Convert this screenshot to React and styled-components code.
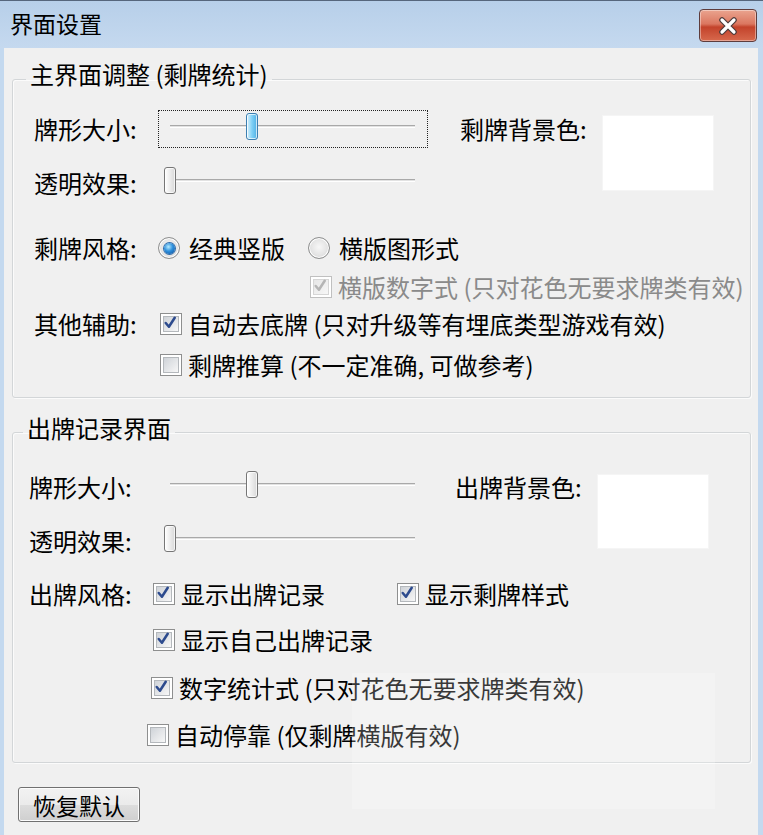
import React from "react";
import styled, { createGlobalStyle } from "styled-components";

const GlobalStyle = createGlobalStyle`
  html, body {
    margin: 0;
    padding: 0;
    background: #f0f0f0;
  }
  body {
    font-family: "Noto Sans CJK SC", "Noto Sans", sans-serif;
    color: #000;
  }
`;

const Window = styled.div`
  position: relative;
  width: 763px;
  height: 835px;
  box-sizing: border-box;
  display: flex;
  flex-direction: column;
  background: #c4d9ef;
  border-top: 1px solid #56667c;
  overflow: hidden;
`;

const TitleBar = styled.div`
  height: 47px;
  flex-shrink: 0;
  display: flex;
  align-items: center;
  justify-content: space-between;
  padding: 0 6px 0 10px;
  background: linear-gradient(#b7cfe9, #c5d9ef);
`;

const Title = styled.span`
  font-size: 23px;
  line-height: 30px;
  margin-top: -4px;
`;

const CloseButton = styled.div`
  width: 58px;
  height: 33px;
  box-sizing: border-box;
  margin-top: 2px;
  border: 1px solid #5e3c3c;
  border-radius: 4px;
  background: linear-gradient(#eaa48f 0%, #db7760 45%, #c3432b 55%, #d7694d 100%);
  box-shadow: inset 0 0 0 1px rgba(255, 255, 255, 0.4);
  display: flex;
  align-items: center;
  justify-content: center;
`;

const Client = styled.div`
  flex: 1;
  margin: 0 5px 0 4px;
  padding: 11px 7px 0 8px;
  background: #f0f0f0;
  display: flex;
  flex-direction: column;
  align-items: stretch;
`;

const GroupBox = styled.fieldset`
  margin: ${(p) => p.$mt}px 0 0;
  padding: ${(p) => p.$pt}px 0 ${(p) => p.$pb}px ${(p) => p.$pl}px;
  border: 1px solid #d3d6d8;
  border-radius: 3px;
  box-shadow: inset 1px 1px 0 #fbfbfb, 1px 1px 0 #fbfbfb;
  min-width: 0;
`;

const Legend = styled.legend`
  font-size: 24px;
  line-height: 30px;
  padding: 0 4px ${(p) => p.$pb}px;
  margin-left: ${(p) => p.$ml}px;
`;

const TopGrid = styled.div`
  display: grid;
  grid-template-columns: ${(p) => p.$label}px 270px ${(p) => p.$gap}px 143px 110px;
  grid-template-rows: 38px 38px;
  row-gap: 16px;
  align-items: center;
`;

const Label = styled.span`
  font-size: 24px;
  line-height: 30px;
  white-space: nowrap;
`;

const Swatch = styled.div`
  grid-column: 5;
  grid-row: 1 / 3;
  align-self: start;
  margin-top: ${(p) => p.$mt}px;
  height: ${(p) => p.$h}px;
  background: #fff;
  box-shadow: 0 0 0 1px #f5f5f5;
`;

const SliderBox = styled.div`
  position: relative;
  height: 38px;
  box-sizing: border-box;
  border: 1px dotted ${(p) => (p.$focus ? "#222" : "transparent")};
`;

const Track = styled.div`
  position: absolute;
  left: 11px;
  right: 12px;
  top: 14px;
  height: 3px;
  box-sizing: border-box;
  background: #e2e2e2;
  border-top: 1px solid #a9a9a9;
  border-bottom: 1px solid #fff;
`;

const Thumb = styled.div`
  position: absolute;
  top: 2px;
  width: 12px;
  height: 27px;
  box-sizing: border-box;
  border-radius: 3px;
  border: 1px solid ${(p) => (p.$active ? "#3c7fb1" : "#767676")};
  background: ${(p) =>
    p.$active
      ? "linear-gradient(90deg, #d9f1fc, #7fd0f6 50%, #4fb0e4)"
      : "linear-gradient(90deg, #ffffff, #ececec 50%, #d8d8d8)"};
  box-shadow: inset 0 0 0 1px rgba(255, 255, 255, 0.7);
`;

const OptionRow = styled.div`
  display: flex;
  align-items: center;
  height: 34px;
  margin-top: ${(p) => p.$mt}px;
  padding-left: ${(p) => p.$indent || 0}px;
`;

const RowLabel = styled(Label)`
  width: ${(p) => p.$w}px;
  flex-shrink: 0;
`;

const OptionGrid = styled.div`
  display: grid;
  grid-template-columns: ${(p) => p.$first}px auto;
  align-items: center;
`;

const OptionItem = styled.label`
  display: flex;
  align-items: center;
  gap: ${(p) => p.$gap}px;
  font-size: 24px;
  line-height: 30px;
  white-space: nowrap;
  color: ${(p) => (p.$disabled ? "#8a8a8a" : "#000")};
`;

const BoxOuter = styled.span`
  width: 22px;
  height: 22px;
  box-sizing: border-box;
  padding: 2px;
  border: 1px solid ${(p) => (p.$disabled ? "#c0c0c0" : "#8e8f8f")};
  background: #fff;
  display: flex;
`;

const BoxInner = styled.span`
  flex: 1;
  position: relative;
  border: 1px solid ${(p) => (p.$disabled ? "#d6d6d6" : "#b4b8bc")};
  background: ${(p) =>
    p.$disabled
      ? "linear-gradient(135deg, #e6e6e6, #f7f7f7)"
      : "linear-gradient(135deg, #cfd3d8, #f7f7f7)"};
`;

const CheckMark = styled.svg`
  position: absolute;
  left: -3px;
  top: -4px;
`;

const RadioOuter = styled.span`
  width: 22px;
  height: 22px;
  box-sizing: border-box;
  border-radius: 50%;
  border: 1px solid #8e8f8f;
  background: radial-gradient(circle at 50% 45%, #f7f7f7 0%, #e4e4e4 55%, #cfcfcf 100%);
  box-shadow: inset 0 0 0 1px #fff;
  display: flex;
  align-items: center;
  justify-content: center;
`;

const RadioDot = styled.span`
  width: 11px;
  height: 11px;
  border-radius: 50%;
  background: radial-gradient(circle at 40% 35%, #b6ecff 0%, #2e8fdc 45%, #0b4c98 100%);
  box-shadow: 0 0 0 1px #2f6aa8;
`;

const ResetButton = styled.button`
  width: 122px;
  height: 35px;
  margin: 24px 0 0 6px;
  padding: 0;
  box-sizing: border-box;
  border: 1px solid #707070;
  border-radius: 3px;
  background: linear-gradient(#f2f2f2 0%, #ebebeb 50%, #dddddd 51%, #cfcfcf 100%);
  box-shadow: inset 0 0 0 1px #fcfcfc;
  font-family: inherit;
  font-size: 23px;
  line-height: 30px;
  color: #000;
`;

const Watermark = styled.div`
  position: absolute;
  left: 352px;
  top: 672px;
  width: 363px;
  height: 136px;
  background: rgba(255, 255, 255, 0.22);
  pointer-events: none;
`;

const Slider = ({ value, focus }) => (
  <SliderBox $focus={focus}>
    <Track />
    <Thumb $active={focus} style={{ left: 11 + value * 233 - 6 + "px" }} />
  </SliderBox>
);

const Checkbox = ({ checked, disabled, gap = 6, children }) => (
  <OptionItem $gap={gap} $disabled={disabled}>
    <BoxOuter $disabled={disabled}>
      <BoxInner $disabled={disabled}>
        {checked && (
          <CheckMark width="19" height="19" viewBox="0 0 18 18">
            <polyline
              points="4.5,9.5 7.5,13 13,4.5"
              fill="none"
              stroke={disabled ? "#b5b5b5" : "#2d4b8e"}
              strokeWidth="2.4"
              strokeLinecap="round"
              strokeLinejoin="round"
            />
          </CheckMark>
        )}
      </BoxInner>
    </BoxOuter>
    {children}
  </OptionItem>
);

const Radio = ({ checked, children }) => (
  <OptionItem $gap={9}>
    <RadioOuter>{checked && <RadioDot />}</RadioOuter>
    {children}
  </OptionItem>
);

const App = () => {
  return (
    <>
      <GlobalStyle />
      <Window>
        <TitleBar>
          <Title>界面设置</Title>
          <CloseButton>
            <svg width="22" height="18" viewBox="0 0 22 18">
              <path
                d="M5 3 L17 15 M17 3 L5 15"
                stroke="#4b3a3a"
                strokeWidth="5.5"
                strokeLinecap="round"
              />
              <path
                d="M5 3 L17 15 M17 3 L5 15"
                stroke="#fff"
                strokeWidth="3.2"
                strokeLinecap="round"
              />
            </svg>
          </CloseButton>
        </TitleBar>
        <Client>
          <GroupBox $mt={0} $pt={11} $pb={15} $pl={21}>
            <Legend $pb={10} $ml={-8}>主界面调整 (剩牌统计)</Legend>
            <TopGrid $label={124} $gap={32}>
              <Label>牌形大小:</Label>
              <Slider value={0.35} focus />
              <span />
              <Label>剩牌背景色:</Label>
              <Swatch $mt={6} $h={74} />
              <Label>透明效果:</Label>
              <Slider value={0} />
            </TopGrid>
            <OptionRow $mt={29}>
              <RowLabel $w={124}>剩牌风格:</RowLabel>
              <OptionGrid $first={150}>
                <Radio checked>经典竖版</Radio>
                <Radio>横版图形式</Radio>
              </OptionGrid>
            </OptionRow>
            <OptionRow $mt={5} $indent={276}>
              <Checkbox checked disabled>
                横版数字式 (只对花色无要求牌类有效)
              </Checkbox>
            </OptionRow>
            <OptionRow $mt={3}>
              <RowLabel $w={126}>其他辅助:</RowLabel>
              <Checkbox checked>自动去底牌 (只对升级等有埋底类型游戏有效)</Checkbox>
            </OptionRow>
            <OptionRow $mt={7} $indent={126}>
              <Checkbox>剩牌推算 (不一定准确, 可做参考)</Checkbox>
            </OptionRow>
          </GroupBox>

          <GroupBox $mt={15} $pt={17} $pb={10} $pl={16}>
            <Legend $pb={8} $ml={-6}>出牌记录界面</Legend>
            <TopGrid $label={129} $gap={27}>
              <Label>牌形大小:</Label>
              <Slider value={0.35} />
              <span />
              <Label>出牌背景色:</Label>
              <Swatch $mt={7} $h={73} />
              <Label>透明效果:</Label>
              <Slider value={0} />
            </TopGrid>
            <OptionRow $mt={17}>
              <RowLabel $w={124}>出牌风格:</RowLabel>
              <OptionGrid $first={244}>
                <Checkbox checked>显示出牌记录</Checkbox>
                <Checkbox checked>显示剩牌样式</Checkbox>
              </OptionGrid>
            </OptionRow>
            <OptionRow $mt={12} $indent={124}>
              <Checkbox checked>显示自己出牌记录</Checkbox>
            </OptionRow>
            <OptionRow $mt={14} $indent={122}>
              <Checkbox checked>数字统计式 (只对花色无要求牌类有效)</Checkbox>
            </OptionRow>
            <OptionRow $mt={13} $indent={118}>
              <Checkbox>自动停靠 (仅剩牌横版有效)</Checkbox>
            </OptionRow>
          </GroupBox>

          <div>
            <ResetButton>恢复默认</ResetButton>
          </div>
        </Client>
        <Watermark />
      </Window>
    </>
  );
};

export default App;
